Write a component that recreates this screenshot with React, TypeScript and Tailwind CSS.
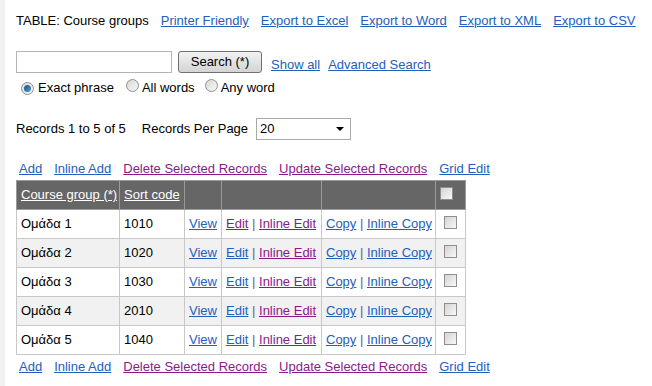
import React from "react";

const BLUE = "text-[#2360bd] underline";
const PURPLE = "text-[#8a1a8a] underline";

function Radio({ checked }: { checked?: boolean }) {
  return (
    <span className="relative inline-flex h-[13px] w-[13px] shrink-0 items-center justify-center rounded-full border border-[#8f8f8f] bg-gradient-to-br from-[#d8d8d8] to-[#f7f7f7]">
      {checked && (
        <span className="h-[7px] w-[7px] rounded-full bg-gradient-to-br from-[#1c4f7a] to-[#4aa3d6]" />
      )}
    </span>
  );
}

function Check() {
  return (
    <span className="inline-block h-[13px] w-[13px] border border-[#8f8f8f] bg-gradient-to-br from-[#d4d4d4] to-[#f8f8f8]" />
  );
}

function LinkBar() {
  return (
    <div className="flex h-[20px] items-center gap-[12px] pl-[3px]">
      <a className={BLUE}>Add</a>
      <a className={BLUE}>Inline Add</a>
      <a className={PURPLE}>Delete Selected Records</a>
      <a className={PURPLE}>Update Selected Records</a>
      <a className={BLUE}>Grid Edit</a>
    </div>
  );
}

const rows = [
  { name: "Ομάδα 1", code: "1010", editVisited: true },
  { name: "Ομάδα 2", code: "1020" },
  { name: "Ομάδα 3", code: "1030" },
  { name: "Ομάδα 4", code: "2010" },
  { name: "Ομάδα 5", code: "1040" },
];

export default function App() {
  const td = "border border-[#c8c8c8] px-[4px] h-[29px] whitespace-nowrap overflow-visible";
  const th = "border border-[#9a9a9a] px-[4px] h-[29px] text-left font-normal whitespace-nowrap";
  return (
    <div
      className="min-h-[386px] w-[652px] border-l-[5px] border-[#f1f1f1] bg-white pl-[11px] text-[13px] text-black"
      style={{ fontFamily: '"Liberation Sans", Arial, sans-serif' }}
    >
      {/* Title + export links */}
      <div className="flex h-[42px] items-center gap-[12px]">
        <span>TABLE: Course groups</span>
        <a className={BLUE}>Printer Friendly</a>
        <a className={BLUE}>Export to Excel</a>
        <a className={BLUE}>Export to Word</a>
        <a className={BLUE}>Export to XML</a>
        <a className={BLUE}>Export to CSV</a>
      </div>

      {/* Search */}
      <div className="mt-[9px] flex items-end">
        <input className="h-[22px] w-[156px] border border-[#b5b5b5] bg-white" />
        <button className="ml-[6px] h-[22px] w-[84px] rounded-[3px] border border-[#707070] bg-gradient-to-b from-[#f2f2f2] to-[#d4d4d4] text-[13px] text-black">
          Search (*)
        </button>
        <a className={BLUE + " ml-[9px] mb-[-1px]"}>Show all</a>
        <a className={BLUE + " ml-[8px] mb-[-1px]"}>Advanced Search</a>
      </div>
      <div className="mt-[5px] flex h-[20px] items-center">
        <span className="ml-[5px]"><Radio checked /></span>
        <span className="ml-[4px]">Exact phrase</span>
        <span className="ml-[12px]"><Radio /></span>
        <span className="ml-[3px]">All words</span>
        <span className="ml-[10px]"><Radio /></span>
        <span className="ml-[3px]">Any word</span>
      </div>

      {/* Records */}
      <div className="mt-[20px] flex items-center">
        <span>Records 1 to 5 of 5</span>
        <span className="ml-[16px]">Records Per Page</span>
        <div className="ml-[8px] flex h-[22px] w-[95px] items-center justify-between border border-[#a9a9a9] pl-[3px] pr-[6px]">
          <span>20</span>
          <span className="h-0 w-0 border-x-[4px] border-t-[4px] border-x-transparent border-t-black" />
        </div>
      </div>

      <div className="mt-[19px]">
        <LinkBar />
      </div>

      <table className="mt-[1px] w-[449px] table-fixed border-collapse">
        <colgroup>
          <col className="w-[103px]" />
          <col className="w-[65px]" />
          <col className="w-[37px]" />
          <col className="w-[100px]" />
          <col className="w-[114px]" />
          <col className="w-[30px]" />
        </colgroup>
        <thead>
          <tr className="bg-[#666666] text-white">
            <th className={th}><a className="underline">Course group (*)</a></th>
            <th className={th}><a className="underline">Sort code</a></th>
            <th className={th} />
            <th className={th} />
            <th className={th} />
            <th className={th + " text-center"}><span className="inline-block align-middle"><Check /></span></th>
          </tr>
        </thead>
        <tbody>
          {rows.map((r, i) => (
            <tr key={r.name} className={i % 2 === 1 ? "bg-[#f1f1f1]" : "bg-white"}>
              <td className={td}>{r.name}</td>
              <td className={td}>{r.code}</td>
              <td className={td}><a className={BLUE}>View</a></td>
              <td className={td}>
                <a className={r.editVisited ? PURPLE : BLUE}>Edit</a>
                <span className="text-[#666]"> | </span>
                <a className={PURPLE}>Inline Edit</a>
              </td>
              <td className={td}>
                <a className={BLUE}>Copy</a>
                <span className="text-[#666]"> | </span>
                <a className={BLUE}>Inline Copy</a>
              </td>
              <td className={td + " text-center"}><span className="inline-block align-middle"><Check /></span></td>
            </tr>
          ))}
        </tbody>
      </table>

      <div className="mt-[2px]">
        <LinkBar />
      </div>
    </div>
  );
}
